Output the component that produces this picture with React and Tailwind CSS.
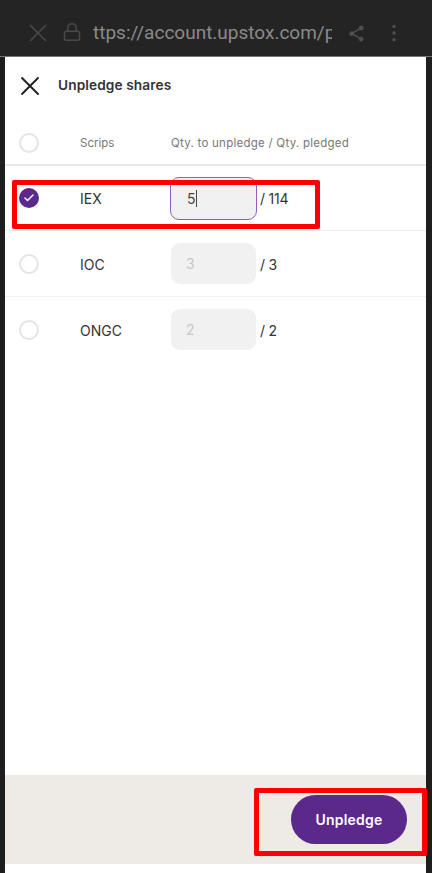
import React from 'react';
import { Lock, X, Check } from 'lucide-react';

const rows = [
    { name: 'IEX', qty: '5', total: '/ 114', active: true, rowClass: 'h-[65px] border-b border-[#f0f0f0]' },
    { name: 'IOC', qty: '3', total: '/ 3', rowClass: 'h-[66px] border-b border-[#f0f0f0]' },
    { name: 'ONGC', qty: '2', total: '/ 2', rowClass: 'h-[65px]' },
];

const Radio = ({ checked }) => (
    checked ? (
        <span className="w-5 h-5 rounded-full bg-[#5a298b] flex items-center justify-center">
            <Check className="w-3 h-3 text-white" strokeWidth={3} />
        </span>
    ) : (
        <span className="w-5 h-5 rounded-full border-2 border-[#e4e4e4] bg-white" />
    )
);

const App = () => (
    <div className="relative w-[432px] h-[873px] overflow-hidden bg-[#1e1e1e] flex flex-col font-['Inter',sans-serif]">
        {/* dimmed browser bar */}
        <div className="h-[57px] shrink-0 flex items-center pl-[23px] pr-[28px] pt-[10px] bg-[#242424] border-b border-[#777]">
            <X className="w-[30px] h-[30px] text-[#484848]" strokeWidth={1.4} />
            <Lock className="w-[20px] h-[20px] ml-[9px] -mt-[2px] text-[#484848]" strokeWidth={1.8} />
            <span className="ml-[11px] w-[239px] overflow-hidden whitespace-nowrap font-['Roboto',sans-serif] text-[19px] text-[#8a8a8a]">ttps://account.upstox.com/pledge</span>
            <svg viewBox="0 0 24 24" className="ml-[15px] w-[19px] h-[19px] fill-[#505050]">
                <path d="M18 16.08c-.76 0-1.44.3-1.96.77L8.91 12.7c.05-.23.09-.46.09-.7s-.04-.47-.09-.7l7.05-4.11c.54.5 1.25.81 2.04.81 1.66 0 3-1.34 3-3s-1.34-3-3-3-3 1.34-3 3c0 .24.04.47.09.7L8.04 9.81C7.5 9.31 6.79 9 6 9c-1.66 0-3 1.34-3 3s1.34 3 3 3c.79 0 1.5-.31 2.04-.81l7.12 4.16c-.05.21-.08.43-.08.65 0 1.61 1.31 2.92 2.92 2.92 1.61 0 2.92-1.31 2.92-2.92s-1.31-2.92-2.92-2.92z" />
            </svg>
            <svg viewBox="0 0 24 24" className="ml-auto w-[20px] h-[20px] fill-[#505050]">
                <circle cx="12" cy="4" r="2" />
                <circle cx="12" cy="12" r="2" />
                <circle cx="12" cy="20" r="2" />
            </svg>
        </div>

        <div className="flex-1 ml-[5px] mr-[6px] bg-white flex flex-col">
            <div className="h-[57px] shrink-0 flex items-center pl-[9px]">
                <X className="w-[32px] h-[32px] text-[#222]" strokeWidth={1.4} />
                <h1 className="ml-[12px] text-[13.7px] tracking-[0.1px] font-semibold text-[#333]">Unpledge shares</h1>
            </div>

            <div className="h-[52px] shrink-0 flex items-center pl-[14px] pt-[8px] border-b-2 border-[#e8e8e8]">
                <Radio />
                <span className="ml-[41px] w-[91px] pt-[2px] text-[11.5px] text-[#777]">Scrips</span>
                <span className="pt-[2px] text-[11.5px] tracking-[0.25px] text-[#777]">Qty. to unpledge / Qty. pledged</span>
            </div>

            {rows.map((row) => (
                <div key={row.name} className={`shrink-0 flex items-center pl-[14px] ${row.rowClass}`}>
                    <Radio checked={row.active} />
                    <span className="ml-[41px] w-[90px] pt-[1px] text-[14px] text-[#333]">{row.name}</span>
                    <div className={`rounded-[9px] bg-[#f1f1f1] flex items-center text-[14px] ${row.active ? 'w-[87px] pl-[16px] h-[43px] border-[1.5px] border-[#8e5fc4] text-[#444]' : 'ml-px mr-px w-[85px] pl-[15px] h-[41px] text-[#c8c8c8]'}`}>
                        {row.qty}
                        {row.active && <span className="w-px h-[17px] bg-[#444]" />}
                    </div>
                    <span className="ml-[3px] pt-[1px] text-[14px] tracking-[-0.2px] text-[#333]">{row.total}</span>
                </div>
            ))}

            <div className="mt-auto mb-[9px] h-[89px] shrink-0 bg-[#eeebe6] flex items-center justify-end pr-[19px]">
                <button className="w-[116px] h-[49px] rounded-full bg-[#5a298b] text-white text-[14px] tracking-[0.2px] font-semibold">Unpledge</button>
            </div>
        </div>

        {/* red annotation boxes */}
        <div className="absolute left-[12px] top-[180px] w-[308px] h-[49px] border-[5px] border-[#ff0000] rounded-[2px]" />
        <div className="absolute left-[254px] top-[788px] w-[173px] h-[68px] border-[5px] border-[#ff0000] rounded-[2px]" />
    </div>
);

export default App;
